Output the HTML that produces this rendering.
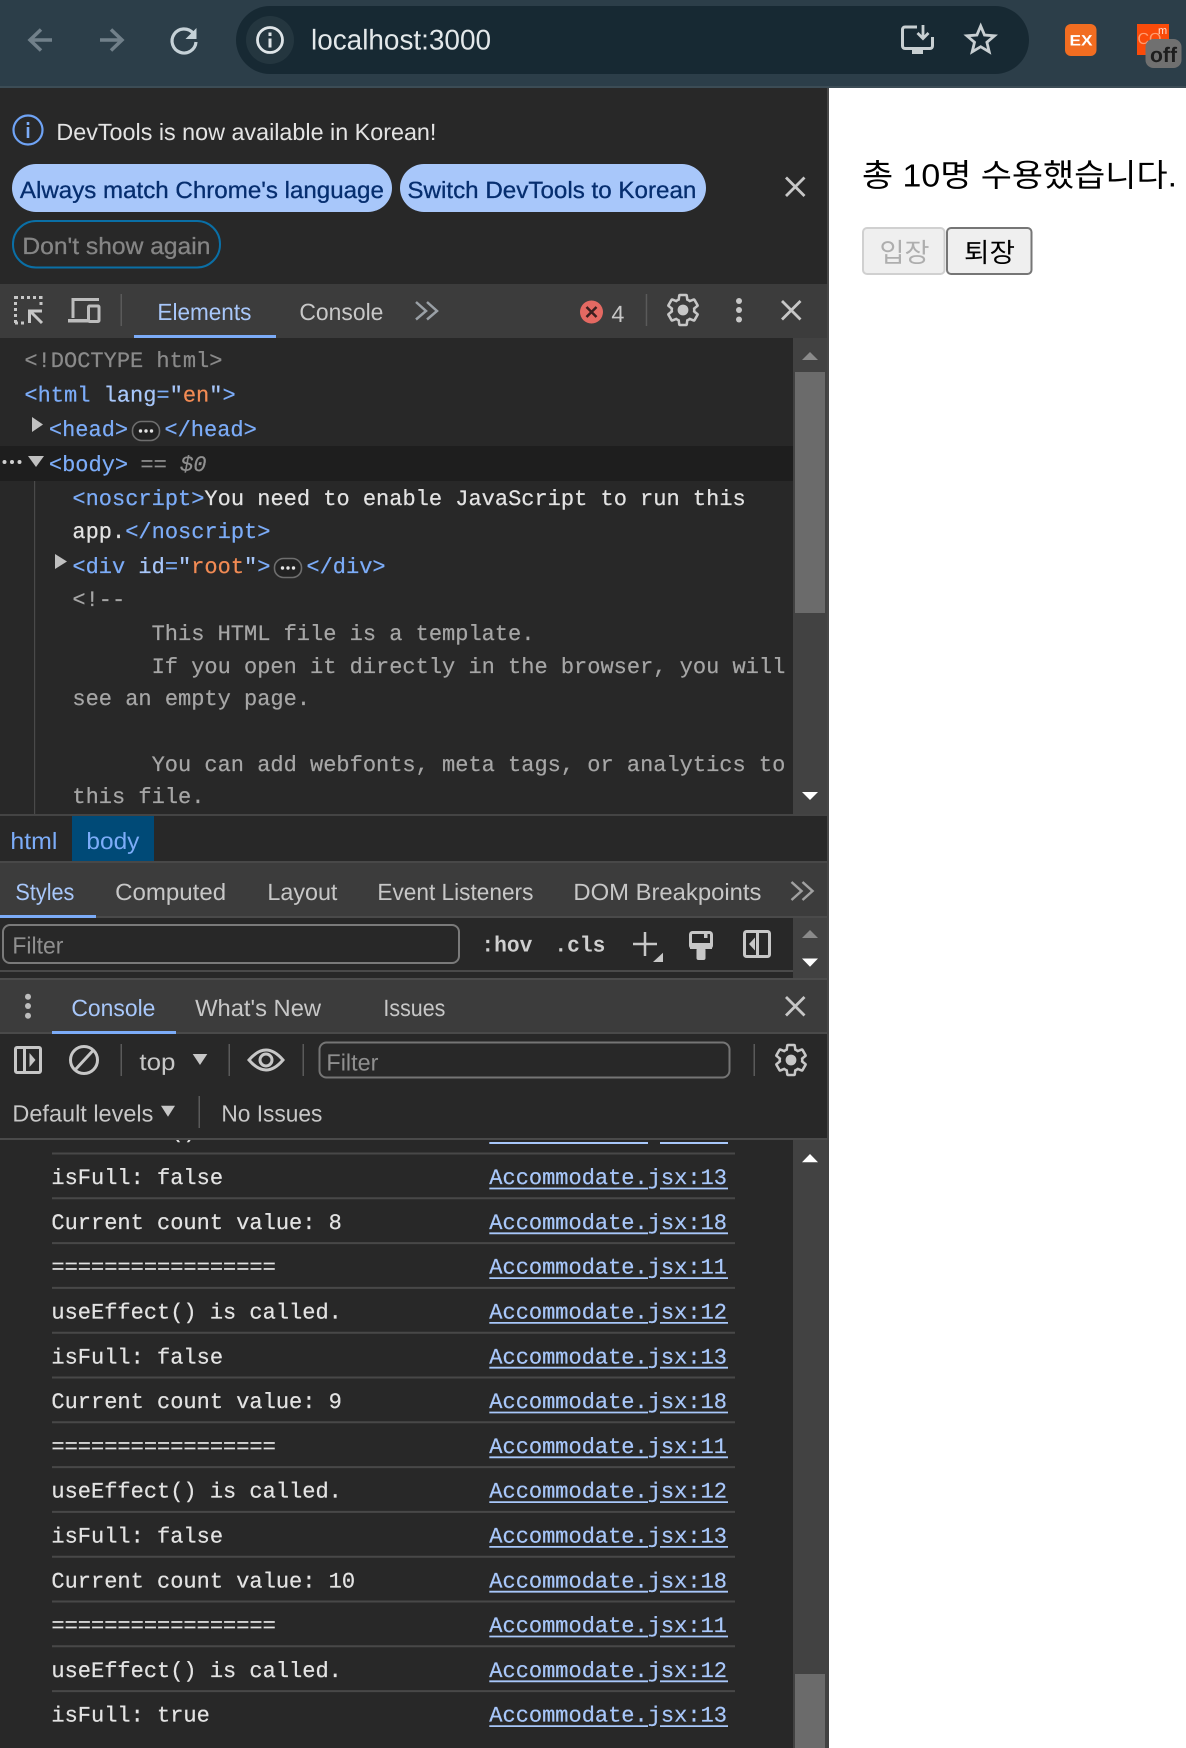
<!DOCTYPE html>
<html lang="en">
<head>
<meta charset="utf-8">
<title>localhost:3000</title>
<style>
html,body{margin:0;padding:0;background:#fff;width:1186px;height:1748px;overflow:hidden}
svg{display:block}
text{text-rendering:geometricPrecision;white-space:pre}
.u{font-family:"Liberation Sans","Noto Sans CJK KR",sans-serif;font-size:23.5px;fill:#c7c7c7;transform:translate(-.6px,0)}
.m{font-family:"Liberation Mono",monospace;font-size:22px;fill:#e3e3e3;stroke:#e3e3e3;stroke-width:.22;transform:translate(-.6px,-.9px)}
.k{font-family:"Liberation Sans","Noto Sans CJK KR",sans-serif}
.t{fill:#7cacf8;stroke:#7cacf8}.a{fill:#a8c7fa;stroke:#a8c7fa}.v{fill:#f28b54;stroke:#f28b54}.c{fill:#a6a6a6;stroke:#a6a6a6}
.act{fill:#a8c7fa}
.bt{fill:#062e6f;stroke:#062e6f;stroke-width:.3}
.l{fill:#a8c7fa;stroke:#a8c7fa}
.ic{fill:none;stroke:#c7c7c7;stroke-width:3}
.dv{fill:#5a5a5a}
</style>
</head>
<body>
<svg xmlns="http://www.w3.org/2000/svg" width="1186" height="1748" viewBox="0 0 1186 1748">
<defs><clipPath id="cl"><rect x="0" y="1140" width="793" height="8"/></clipPath></defs>

<!-- page -->
<rect x="0" y="0" width="1186" height="1748" fill="#ffffff"/>
<text class="k" x="862" y="186.500" font-size="32" textLength="315" lengthAdjust="spacingAndGlyphs" fill="#000">총 10명 수용했습니다.</text>
<rect x="863" y="228" width="81.500" height="46" rx="4" fill="#efefef" stroke="#d0d0d0" stroke-width="2"/>
<text class="k" x="879.500" y="262" font-size="26.700" textLength="50" lengthAdjust="spacingAndGlyphs" fill="#aeaeae">입장</text>
<rect x="947" y="228" width="84.500" height="46" rx="4" fill="#efefef" stroke="#767676" stroke-width="2"/>
<text class="k" x="964" y="262" font-size="26.700" textLength="51" lengthAdjust="spacingAndGlyphs" fill="#000">퇴장</text>

<!-- browser toolbar -->
<rect x="0" y="0" width="1186" height="87" fill="#2c3e49"/>
<rect x="0" y="86" width="1186" height="2" fill="#3c4c55"/>
<path d="M52 40H31M41 29.500L30 40L41 50.500" fill="none" stroke="#71808a" stroke-width="3.500"/>
<path d="M100 40H121M111 29.500L122 40L111 50.500" fill="none" stroke="#71808a" stroke-width="3.500"/>
<path d="M193 33A12 12 0 1 0 196 42" fill="none" stroke="#c5d1d7" stroke-width="3.200"/>
<path d="M196.500 28V39H185.500Z" fill="#c5d1d7"/>
<rect x="236" y="6" width="793" height="68" rx="34" fill="#172933"/>
<circle cx="270" cy="40" r="24" fill="#24363f"/>
<circle cx="270" cy="40" r="12.500" fill="none" stroke="#dfe5e8" stroke-width="2.800"/>
<rect x="268.500" y="38.500" width="3" height="9" fill="#dfe5e8"/><rect x="268.500" y="32.500" width="3" height="3.500" fill="#dfe5e8"/>
<text class="k" x="311" y="49.500" font-size="28.500" textLength="180" lengthAdjust="spacingAndGlyphs" fill="#e3e8ea">localhost:3000</text>
<path d="M917 27H905a2.500 2.500 0 0 0-2.500 2.500V46a2.500 2.500 0 0 0 2.500 2.500H930a2.500 2.500 0 0 0 2.500-2.500V37" fill="none" stroke="#c8cfd2" stroke-width="3"/>
<rect x="912" y="49" width="11" height="5" fill="#c8cfd2"/>
<path d="M923 25V38M917.500 33L923 38.500L928.500 33" fill="none" stroke="#c8cfd2" stroke-width="2.800"/>
<g transform="translate(-.8 -.5)"><path d="M981.500 26.500L985.300 35.500L995.300 36.300L987.700 42.800L990 52.300L981.500 47.200L973 52.300L975.300 42.800L967.700 36.300L977.700 35.500Z" fill="none" stroke="#c8cfd2" stroke-width="2.800"/></g>
<rect x="1065" y="24" width="31.500" height="32" rx="6" fill="#f26d21"/>
<text x="1069.500" y="45.500" font-family="Liberation Sans" font-weight="700" font-size="15" textLength="23" lengthAdjust="spacingAndGlyphs" fill="#fff">EX</text>
<rect x="1137" y="24" width="32" height="31" fill="#fa4b0a"/>
<text x="1137.500" y="44" font-family="Liberation Sans" font-size="16" fill="#ff9c70">CO</text>
<text x="1158" y="34" font-family="Liberation Sans" font-size="11" fill="#ffe3d6">m</text>
<rect x="1145.500" y="39" width="36" height="29" rx="8" fill="#707070"/>
<text x="1150" y="62" font-family="Liberation Sans" font-weight="700" font-size="21" textLength="27" lengthAdjust="spacingAndGlyphs" fill="#1e1e1e">off</text>

<!-- devtools base -->
<rect x="0" y="88" width="827" height="1660" fill="#282828"/>
<rect x="827" y="88" width="2" height="1660" fill="#484848"/>

<!-- infobar -->
<circle cx="28" cy="130" r="14.500" fill="none" stroke="#6fa3f5" stroke-width="2.200"/>
<rect x="26.700" y="127" width="2.600" height="11" fill="#7cacf8"/><rect x="26.700" y="122" width="2.600" height="3" fill="#7cacf8"/>
<text class="u" x="57" y="140" textLength="380" lengthAdjust="spacingAndGlyphs" style="fill:#e3e3e3">DevTools is now available in Korean!</text>
<rect x="12" y="164" width="380" height="48" rx="24" fill="#a8c7fa"/>
<text class="u bt" x="20.500" y="198" textLength="364" lengthAdjust="spacingAndGlyphs">Always match Chrome's language</text>
<rect x="400" y="164" width="306" height="48" rx="24" fill="#a8c7fa"/>
<text class="u bt" x="408" y="198" textLength="289" lengthAdjust="spacingAndGlyphs">Switch DevTools to Korean</text>
<rect x="13" y="221" width="207" height="46.500" rx="23" fill="none" stroke="#0a6fa6" stroke-width="2"/>
<text class="u" x="23" y="254" textLength="188" lengthAdjust="spacingAndGlyphs" style="fill:#858585;stroke:#858585;stroke-width:.3">Don't show again</text>
<path d="M786 177.500L804.500 196M804.500 177.500L786 196" fill="none" stroke="#c7c7c7" stroke-width="2.800"/>

<!-- main tab bar -->
<rect x="0" y="284" width="827" height="54" fill="#3c3c3c"/>
<path d="M15.500 296V324M41 296V308M15 297.500H42M15 323H27" fill="none" stroke="#c7c7c7" stroke-width="3" stroke-dasharray="3 3"/>
<path d="M29.500 323V311H42M30 311L42 323" fill="none" stroke="#c7c7c7" stroke-width="3"/>
<path d="M73 318V299.500H99" fill="none" stroke="#bdbdbd" stroke-width="3"/>
<rect x="68" y="319" width="20" height="3.500" fill="#bdbdbd"/>
<rect x="88.500" y="306" width="10.500" height="15.500" rx="1" fill="none" stroke="#bdbdbd" stroke-width="3"/>
<rect x="120.500" y="294" width="1.500" height="32" class="dv"/>
<text class="u act" x="158" y="320" textLength="94" lengthAdjust="spacingAndGlyphs">Elements</text>
<rect x="134" y="335" width="142" height="3" fill="#7cacf8"/>
<text class="u" x="300" y="320" textLength="84" lengthAdjust="spacingAndGlyphs">Console</text>
<path d="M416 302L426 311L416 319.500M427 302L437 311L427 319.500" fill="none" stroke="#9aa0a6" stroke-width="2.500"/>
<circle cx="591.500" cy="312" r="11.500" fill="#e46962"/>
<path d="M586.500 307L596.500 317M596.500 307L586.500 317" stroke="#3a1f1f" stroke-width="2.500" fill="none"/>
<text class="u" x="612" y="322" textLength="13" lengthAdjust="spacingAndGlyphs">4</text>
<rect x="645.700" y="294" width="1.500" height="32" class="dv"/>
<g transform="translate(665 292) scale(1.5)"><path d="M19.430 12.980c.04-.32.07-.64.07-.98s-.03-.66-.07-.98l2.110-1.650c.19-.15.24-.42.12-.64l-2-3.460c-.12-.22-.39-.3-.61-.22l-2.490 1c-.52-.4-1.080-.73-1.690-.98l-.38-2.650C14.460 2.180 14.250 2 14 2h-4c-.25 0-.46.18-.49.42l-.38 2.650c-.61.25-1.170.59-1.690.98l-2.490-1c-.23-.09-.49 0-.61.22l-2 3.460c-.13.22-.07.49.12.64l2.110 1.650c-.04.32-.07.65-.07.98s.03.66.07.98l-2.110 1.650c-.19.15-.24.42-.12.64l2 3.460c.12.22.39.3.61.22l2.490-1c.52.4 1.080.73 1.690.98l.38 2.650c.03.24.24.42.49.42h4c.25 0 .46-.18.49-.42l.38-2.650c.61-.25 1.170-.59 1.690-.98l2.490 1c.23.09.49 0 .61-.22l2-3.460c.12-.22.07-.49-.12-.64l-2.110-1.650z" fill="none" stroke="#c7c7c7" stroke-width="1.700"/><circle cx="12" cy="12" r="3.600" fill="#c7c7c7"/></g>
<circle cx="739" cy="301" r="3" fill="#c7c7c7"/><circle cx="739" cy="310" r="3" fill="#c7c7c7"/><circle cx="739" cy="319.500" r="3" fill="#c7c7c7"/>
<path d="M782 301L800.500 319.500M800.500 301L782 319.500" fill="none" stroke="#c7c7c7" stroke-width="2.800"/>

<!-- elements panel -->
<rect x="0" y="446" width="793" height="35" fill="#1e1e1e"/>
<rect x="34" y="481" width="1.200" height="333" fill="#4a4a4a"/>
<text class="m" x="25" y="368" style="fill:#8a8a8a;stroke:#8a8a8a">&lt;!DOCTYPE html&gt;</text>
<text class="m" x="25" y="402.500"><tspan class="t">&lt;html</tspan> <tspan class="a">lang</tspan><tspan class="t">=</tspan><tspan class="a">"</tspan><tspan class="v">en</tspan><tspan class="a">"</tspan><tspan class="t">&gt;</tspan></text>
<path d="M32 417V432L43 424.500Z" fill="#c0c0c0"/>
<text class="m t" x="49.500" y="437">&lt;head&gt;</text>
<rect x="132.500" y="421.500" width="27" height="19" rx="9" fill="#222" stroke="#6e6e6e" stroke-width="1.600"/>
<circle cx="140.500" cy="431" r="1.700" fill="#e3e3e3"/><circle cx="146" cy="431" r="1.700" fill="#e3e3e3"/><circle cx="151.500" cy="431" r="1.700" fill="#e3e3e3"/>
<text class="m t" x="165" y="437">&lt;/head&gt;</text>
<circle cx="4.500" cy="462" r="2" fill="#d0d0d0"/><circle cx="12" cy="462" r="2" fill="#d0d0d0"/><circle cx="19.500" cy="462" r="2" fill="#d0d0d0"/>
<path d="M28 456H44L36 467Z" fill="#c0c0c0"/>
<text class="m t" x="49.500" y="472">&lt;body&gt;</text>
<text class="m" x="141" y="472" font-style="italic" style="fill:#8f8f8f;stroke:#8f8f8f">== $0</text>
<text class="m" x="73" y="506"><tspan class="t">&lt;noscript&gt;</tspan>You need to enable JavaScript to run this</text>
<text class="m" x="73" y="539">app.<tspan class="t">&lt;/noscript&gt;</tspan></text>
<path d="M55 554V569L67 561.500Z" fill="#c0c0c0"/>
<text class="m" x="73" y="573.700"><tspan class="t">&lt;div</tspan> <tspan class="a">id</tspan><tspan class="t">=</tspan><tspan class="a">"</tspan><tspan class="v">root</tspan><tspan class="a">"</tspan><tspan class="t">&gt;</tspan></text>
<rect x="274.500" y="558.500" width="27" height="19" rx="9" fill="#222" stroke="#6e6e6e" stroke-width="1.600"/>
<circle cx="282.500" cy="568" r="1.700" fill="#e3e3e3"/><circle cx="288" cy="568" r="1.700" fill="#e3e3e3"/><circle cx="293.500" cy="568" r="1.700" fill="#e3e3e3"/>
<text class="m t" x="307" y="573.700">&lt;/div&gt;</text>
<text class="m c" x="73" y="607">&lt;!--</text>
<text class="m c" x="152.200" y="641">This HTML file is a template.</text>
<text class="m c" x="152.200" y="674">If you open it directly in the browser, you will</text>
<text class="m c" x="73" y="706">see an empty page.</text>
<text class="m c" x="152.200" y="772">You can add webfonts, meta tags, or analytics to</text>
<text class="m c" x="73" y="804">this file.</text>
<rect x="793" y="338" width="34" height="476" fill="#424242"/>
<rect x="795" y="372" width="30" height="241" fill="#6b6b6b"/>
<path d="M810 352L818 360H802Z" fill="#8a8a8a"/>
<path d="M802 792H818L810 800Z" fill="#ffffff"/>
<rect x="0" y="814" width="827" height="2" fill="#444444"/>

<!-- breadcrumbs -->
<rect x="72" y="816" width="82" height="46" fill="#004a77"/>
<text class="u" x="11" y="849" textLength="47" lengthAdjust="spacingAndGlyphs" style="fill:#7cacf8">html</text>
<text class="u" x="87" y="849" textLength="53" lengthAdjust="spacingAndGlyphs" style="fill:#7cacf8">body</text>

<!-- styles tab bar -->
<rect x="0" y="862" width="827" height="56" fill="#3c3c3c"/>
<rect x="0" y="861" width="827" height="2" fill="#484848"/>
<rect x="0" y="916" width="827" height="2" fill="#4a4a4a"/>
<text class="u act" x="16" y="900" textLength="59" lengthAdjust="spacingAndGlyphs">Styles</text>
<rect x="0" y="915" width="96" height="3" fill="#7cacf8"/>
<text class="u" x="115.700" y="900" textLength="111" lengthAdjust="spacingAndGlyphs">Computed</text>
<text class="u" x="268" y="900" textLength="70" lengthAdjust="spacingAndGlyphs">Layout</text>
<text class="u" x="378" y="900" textLength="156" lengthAdjust="spacingAndGlyphs">Event Listeners</text>
<text class="u" x="574" y="900" textLength="188" lengthAdjust="spacingAndGlyphs">DOM Breakpoints</text>
<path d="M791.500 882L801.500 891L791.500 900M802.500 882L812.500 891L802.500 900" fill="none" stroke="#a0a0a0" stroke-width="2.500"/>

<!-- styles filter row -->
<rect x="3" y="925" width="456" height="38" rx="7" fill="none" stroke="#7a7a7a" stroke-width="2"/>
<text class="u" x="13" y="953.700" textLength="51" lengthAdjust="spacingAndGlyphs" style="fill:#8f8f8f">Filter</text>
<text class="m" x="482" y="952.500" font-weight="700" textLength="51" lengthAdjust="spacingAndGlyphs" style="fill:#cfcfcf;stroke:none">:hov</text>
<text class="m" x="555" y="952.500" font-weight="700" textLength="51" lengthAdjust="spacingAndGlyphs" style="fill:#cfcfcf;stroke:none">.cls</text>
<path d="M633 944H657M645 932V956" fill="none" stroke="#c7c7c7" stroke-width="2.500"/>
<path d="M663 952.700V962H653Z" fill="#c7c7c7"/>
<rect x="690.500" y="932.500" width="21" height="15" rx="2" fill="none" stroke="#c7c7c7" stroke-width="3"/>
<rect x="690" y="943" width="22" height="6" fill="#c7c7c7"/>
<rect x="704" y="933" width="3.500" height="5" fill="#c7c7c7"/>
<rect x="696.500" y="948" width="9" height="12" rx="2" fill="#c7c7c7"/>
<rect x="744.500" y="931.500" width="25" height="25" rx="2" fill="none" stroke="#c7c7c7" stroke-width="3"/>
<rect x="756" y="931" width="3" height="26" fill="#c7c7c7"/>
<path d="M755 937.500V950.500L749 944Z" fill="#c7c7c7"/>
<rect x="793" y="918" width="34" height="60" fill="#424242"/>
<path d="M810 930L818 938H802Z" fill="#8a8a8a"/>
<path d="M802 958.500H818L810 966.700Z" fill="#ffffff"/>
<rect x="0" y="970" width="793" height="2" fill="#4a4a4a"/>

<!-- drawer header -->
<rect x="0" y="978" width="827" height="56" fill="#3c3c3c"/>
<rect x="0" y="978" width="827" height="2" fill="#4c4c4c"/>
<rect x="0" y="1032" width="827" height="2" fill="#4a4a4a"/>
<circle cx="28" cy="996.700" r="3" fill="#bdbdbd"/><circle cx="28" cy="1006" r="3" fill="#bdbdbd"/><circle cx="28" cy="1015.700" r="3" fill="#bdbdbd"/>
<text class="u act" x="72" y="1016" textLength="84" lengthAdjust="spacingAndGlyphs">Console</text>
<rect x="52" y="1031" width="124" height="3" fill="#7cacf8"/>
<text class="u" x="195.700" y="1016" textLength="126" lengthAdjust="spacingAndGlyphs">What's New</text>
<text class="u" x="384" y="1016" textLength="62" lengthAdjust="spacingAndGlyphs">Issues</text>
<path d="M786 997L804.500 1015.500M804.500 997L786 1015.500" fill="none" stroke="#c7c7c7" stroke-width="2.800"/>

<!-- console rows (partial row sits behind the toolbar) -->
<g clip-path="url(#cl)">
<text class="m" x="52" y="1138.500">useEffect() is called.</text>
<path d="M489.300 1143H648M660 1143H728" stroke="#a8c7fa" stroke-width="2" fill="none"/>
</g>

<!-- console toolbar -->
<rect x="15.500" y="1047.500" width="25" height="25" rx="1.500" class="ic"/>
<rect x="23" y="1047" width="3" height="26" fill="#c7c7c7"/>
<path d="M29.500 1053V1067L35.500 1060Z" fill="#c7c7c7"/>
<circle cx="84" cy="1060" r="13.500" class="ic"/>
<path d="M75 1070L93.500 1050" class="ic"/>
<rect x="120.500" y="1044" width="1.500" height="32" class="dv"/>
<text class="u" x="140" y="1070" textLength="36" lengthAdjust="spacingAndGlyphs">top</text>
<path d="M192.700 1054H207.300L200 1065Z" fill="#c7c7c7"/>
<rect x="228.500" y="1044" width="1.500" height="32" class="dv"/>
<path d="M249 1060Q266 1040 283 1060Q266 1080 249 1060Z" class="ic"/>
<circle cx="266" cy="1060" r="6" class="ic"/>
<rect x="302.500" y="1044" width="1.500" height="32" class="dv"/>
<rect x="319.500" y="1042.500" width="410" height="35" rx="7" fill="none" stroke="#757575" stroke-width="2"/>
<text class="u" x="327" y="1070.700" textLength="52" lengthAdjust="spacingAndGlyphs" style="fill:#8f8f8f">Filter</text>
<rect x="753.500" y="1044" width="1.500" height="32" class="dv"/>
<g transform="translate(773 1042) scale(1.5)"><path d="M19.430 12.980c.04-.32.07-.64.07-.98s-.03-.66-.07-.98l2.110-1.650c.19-.15.24-.42.12-.64l-2-3.460c-.12-.22-.39-.3-.61-.22l-2.490 1c-.52-.4-1.080-.73-1.690-.98l-.38-2.650C14.460 2.180 14.250 2 14 2h-4c-.25 0-.46.18-.49.42l-.38 2.650c-.61.25-1.170.59-1.690.98l-2.490-1c-.23-.09-.49 0-.61.22l-2 3.460c-.13.22-.07.49.12.64l2.110 1.650c-.04.32-.07.65-.07.98s.03.66.07.98l-2.110 1.650c-.19.15-.24.42-.12.64l2 3.460c.12.22.39.3.61.22l2.490-1c.52.4 1.080.73 1.690.98l.38 2.650c.03.24.24.42.49.42h4c.25 0 .46-.18.49-.42l.38-2.650c.61-.25 1.170-.59 1.690-.98l2.490 1c.23.09.49 0 .61-.22l2-3.460c.12-.22.07-.49-.12-.64l-2.110-1.650z" fill="none" stroke="#c7c7c7" stroke-width="1.700"/><circle cx="12" cy="12" r="3.600" fill="#c7c7c7"/></g>
<text class="u" x="13" y="1121.700" textLength="141" lengthAdjust="spacingAndGlyphs">Default levels</text>
<path d="M161 1105.700H175L168 1116.700Z" fill="#c7c7c7"/>
<rect x="198.500" y="1096" width="1.500" height="32" class="dv"/>
<text class="u" x="222" y="1121.700" textLength="101" lengthAdjust="spacingAndGlyphs">No Issues</text>
<rect x="0" y="1138" width="827" height="2" fill="#4a4a4a"/>

<!-- console list -->
<path d="M52 1153.500H735M52 1198.300H735M52 1243.100H735M52 1287.900H735M52 1332.700H735M52 1377.500H735M52 1422.300H735M52 1467.100H735M52 1511.900H735M52 1556.700H735M52 1601.500H735M52 1646.300H735M52 1691.100H735" stroke="#484848" stroke-width="2" fill="none"/>
<path d="M489.300 1188.500H648M660 1188.500H728M489.300 1233.300H648M660 1233.300H728M489.300 1278.100H648M660 1278.100H728M489.300 1322.900H648M660 1322.900H728M489.300 1367.700H648M660 1367.700H728M489.300 1412.500H648M660 1412.500H728M489.300 1457.300H648M660 1457.300H728M489.300 1502.100H648M660 1502.100H728M489.300 1546.900H648M660 1546.900H728M489.300 1591.700H648M660 1591.700H728M489.300 1636.500H648M660 1636.500H728M489.300 1681.300H648M660 1681.300H728M489.300 1726.100H648M660 1726.100H728" stroke="#a8c7fa" stroke-width="1.800" fill="none"/>

<text class="m" x="52" y="1185">isFull: false</text><text class="m l" x="489.900" y="1185">Accommodate.jsx:13</text>
<text class="m" x="52" y="1229.800">Current count value: 8</text><text class="m l" x="489.900" y="1229.800">Accommodate.jsx:18</text>
<text class="m" x="52" y="1274.600">=================</text><text class="m l" x="489.900" y="1274.600">Accommodate.jsx:11</text>
<text class="m" x="52" y="1319.400">useEffect() is called.</text><text class="m l" x="489.900" y="1319.400">Accommodate.jsx:12</text>
<text class="m" x="52" y="1364.200">isFull: false</text><text class="m l" x="489.900" y="1364.200">Accommodate.jsx:13</text>
<text class="m" x="52" y="1409">Current count value: 9</text><text class="m l" x="489.900" y="1409">Accommodate.jsx:18</text>
<text class="m" x="52" y="1453.800">=================</text><text class="m l" x="489.900" y="1453.800">Accommodate.jsx:11</text>
<text class="m" x="52" y="1498.600">useEffect() is called.</text><text class="m l" x="489.900" y="1498.600">Accommodate.jsx:12</text>
<text class="m" x="52" y="1543.400">isFull: false</text><text class="m l" x="489.900" y="1543.400">Accommodate.jsx:13</text>
<text class="m" x="52" y="1588.200">Current count value: 10</text><text class="m l" x="489.900" y="1588.200">Accommodate.jsx:18</text>
<text class="m" x="52" y="1633">=================</text><text class="m l" x="489.900" y="1633">Accommodate.jsx:11</text>
<text class="m" x="52" y="1677.800">useEffect() is called.</text><text class="m l" x="489.900" y="1677.800">Accommodate.jsx:12</text>
<text class="m" x="52" y="1722.600">isFull: true</text><text class="m l" x="489.900" y="1722.600">Accommodate.jsx:13</text>

<rect x="793" y="1140" width="36" height="608" fill="#424242"/>
<rect x="795" y="1674" width="30" height="74" fill="#6b6b6b"/>
<path d="M810 1154L818 1162.300H802Z" fill="#ffffff"/>
</svg>
</body>
</html>
